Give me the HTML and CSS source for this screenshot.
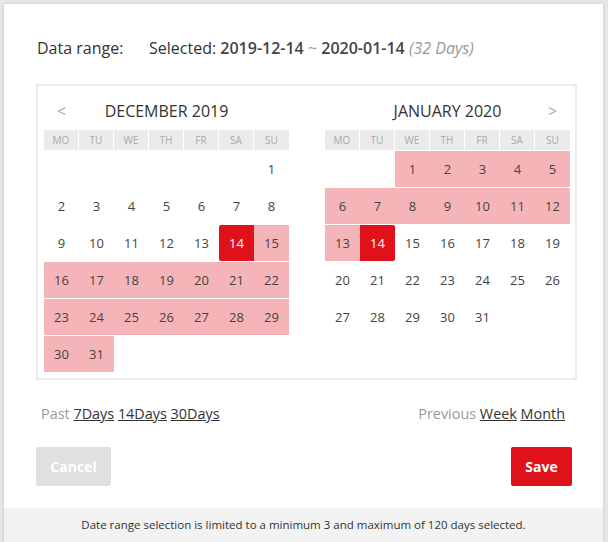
FILE: index.html
```html
<!DOCTYPE html>
<html>
<head>
<meta charset="utf-8">
<link rel="stylesheet" href="styles.css">
</head>
<body>
<div class="modal">
  <div class="content">
    <div class="range-row">
      <span class="label">Data range:</span>
      <span class="selected">Selected: <b>2019-12-14</b> <span class="tilde">~</span> <b>2020-01-14</b> <i>(32 Days)</i></span>
    </div>
    <div class="calbox">
      <div class="month">
        <div class="mhead"><span class="nav">&lt;</span><span class="mtitle">DECEMBER 2019</span><span class="nav"></span></div>
        <div class="grid">
          <div class="wd">MO</div><div class="wd">TU</div><div class="wd">WE</div><div class="wd">TH</div><div class="wd">FR</div><div class="wd">SA</div><div class="wd last">SU</div>
          <div class="d"></div><div class="d"></div><div class="d"></div><div class="d"></div><div class="d"></div><div class="d"></div><div class="d">1</div>
          <div class="d">2</div><div class="d">3</div><div class="d">4</div><div class="d">5</div><div class="d">6</div><div class="d">7</div><div class="d">8</div>
          <div class="d">9</div><div class="d">10</div><div class="d">11</div><div class="d">12</div><div class="d">13</div><div class="d sel start">14</div><div class="d in">15</div>
          <div class="d in">16</div><div class="d in">17</div><div class="d in">18</div><div class="d in">19</div><div class="d in">20</div><div class="d in">21</div><div class="d in">22</div>
          <div class="d in">23</div><div class="d in">24</div><div class="d in">25</div><div class="d in">26</div><div class="d in">27</div><div class="d in">28</div><div class="d in">29</div>
          <div class="d in">30</div><div class="d in">31</div>
        </div>
      </div>
      <div class="month">
        <div class="mhead"><span class="nav"></span><span class="mtitle">JANUARY 2020</span><span class="nav">&gt;</span></div>
        <div class="grid">
          <div class="wd">MO</div><div class="wd">TU</div><div class="wd">WE</div><div class="wd">TH</div><div class="wd">FR</div><div class="wd">SA</div><div class="wd last">SU</div>
          <div class="d"></div><div class="d"></div><div class="d in">1</div><div class="d in">2</div><div class="d in">3</div><div class="d in">4</div><div class="d in">5</div>
          <div class="d in">6</div><div class="d in">7</div><div class="d in">8</div><div class="d in">9</div><div class="d in">10</div><div class="d in">11</div><div class="d in">12</div>
          <div class="d in">13</div><div class="d sel end">14</div><div class="d">15</div><div class="d">16</div><div class="d">17</div><div class="d">18</div><div class="d">19</div>
          <div class="d">20</div><div class="d">21</div><div class="d">22</div><div class="d">23</div><div class="d">24</div><div class="d">25</div><div class="d">26</div>
          <div class="d">27</div><div class="d">28</div><div class="d">29</div><div class="d">30</div><div class="d">31</div>
        </div>
      </div>
    </div>
    <div class="quick">
      <div class="past"><span class="muted">Past</span> <a href="#">7Days</a> <a href="#">14Days</a> <a href="#">30Days</a></div>
      <div class="prev"><span class="muted">Previous</span> <a href="#">Week</a> <a href="#">Month</a></div>
    </div>
    <div class="buttons">
      <button class="btn cancel">Cancel</button>
      <button class="btn save">Save</button>
    </div>
  </div>
  <div class="footer">Date range selection is limited to a minimum 3 and maximum of 120 days selected.</div>
</div>
</body>
</html>
```
FILE: styles.css
```css
html, body {
  margin: 0;
  padding: 0;
  background: #e6e6e6;
  font-family: "Open Sans", "DejaVu Sans", sans-serif;
  color: #333;
  overflow: hidden;
}
.modal {
  margin: 4px 0 0 4px;
  width: 599px;
  height: 560px;
  background: #fff;
  box-shadow: 0 0 3px rgba(0,0,0,0.15);
}
.content {
  padding: 34px 26px 22px 32px;
}
.range-row {
  display: flex;
  height: 20px;
  line-height: 20px;
  font-size: 16px;
  color: #333;
}
.label {
  width: 112px;
  padding-left: 1px;
}
.selected b {
  font-weight: 600;
  color: #444;
}
.tilde {
  color: #999;
}
.selected i {
  color: #999;
}
.calbox {
  margin-top: 26px;
  border: 2px solid #ececec;
  padding: 0 5px 6px 6px;
  display: flex;
  justify-content: space-between;
}
.month {
  width: 245px;
}
.mhead {
  display: grid;
  grid-template-columns: 35px 1fr 35px;
  align-items: center;
  height: 38px;
  padding-top: 6px;
}
.mtitle {
  text-align: center;
  font-size: 16px;
  color: #333;
}
.nav {
  text-align: center;
  font-size: 16px;
  color: #aaa;
}
.grid {
  display: grid;
  grid-template-columns: repeat(7, 35px);
  grid-auto-rows: 36px;
  grid-template-rows: 20px;
  row-gap: 1px;
}
.wd {
  background: #ebebeb;
  border-right: 1px solid #fff;
  font-size: 10px;
  color: #aaa;
  text-align: center;
  line-height: 20px;
}
.wd.last {
  border-right: none;
}
.d {
  font-size: 13px;
  color: #444;
  display: flex;
  align-items: center;
  justify-content: center;
}
.d.in {
  background: #f5b5b8;
}
.d.sel {
  background: #df121b;
  color: #fff;
}
.d.start {
  border-radius: 2px 0 0 2px;
}
.d.end {
  border-radius: 0 2px 2px 0;
}
.quick {
  margin-top: 24px;
  display: flex;
  justify-content: space-between;
  padding: 0 12px 0 5px;
  font-size: 14.4px;
  line-height: 20px;
}
.muted {
  color: #999;
}
.quick a {
  color: #333;
  text-decoration: underline;
}
.buttons {
  margin-top: 23px;
  display: flex;
  justify-content: space-between;
  padding-right: 5px;
}
.btn {
  height: 39px;
  border: none;
  border-radius: 2px;
  font-family: "Open Sans", "DejaVu Sans", sans-serif;
  font-size: 14px;
  font-weight: 700;
  color: #fff;
  padding: 0;
}
.cancel {
  width: 75px;
  background: #e0e0e0;
}
.save {
  width: 61px;
  background: #df121b;
}
.footer {
  background: #f2f2f2;
  height: 60px;
  line-height: 34px;
  text-align: center;
  font-size: 11.5px;
  color: #333;
}
```
